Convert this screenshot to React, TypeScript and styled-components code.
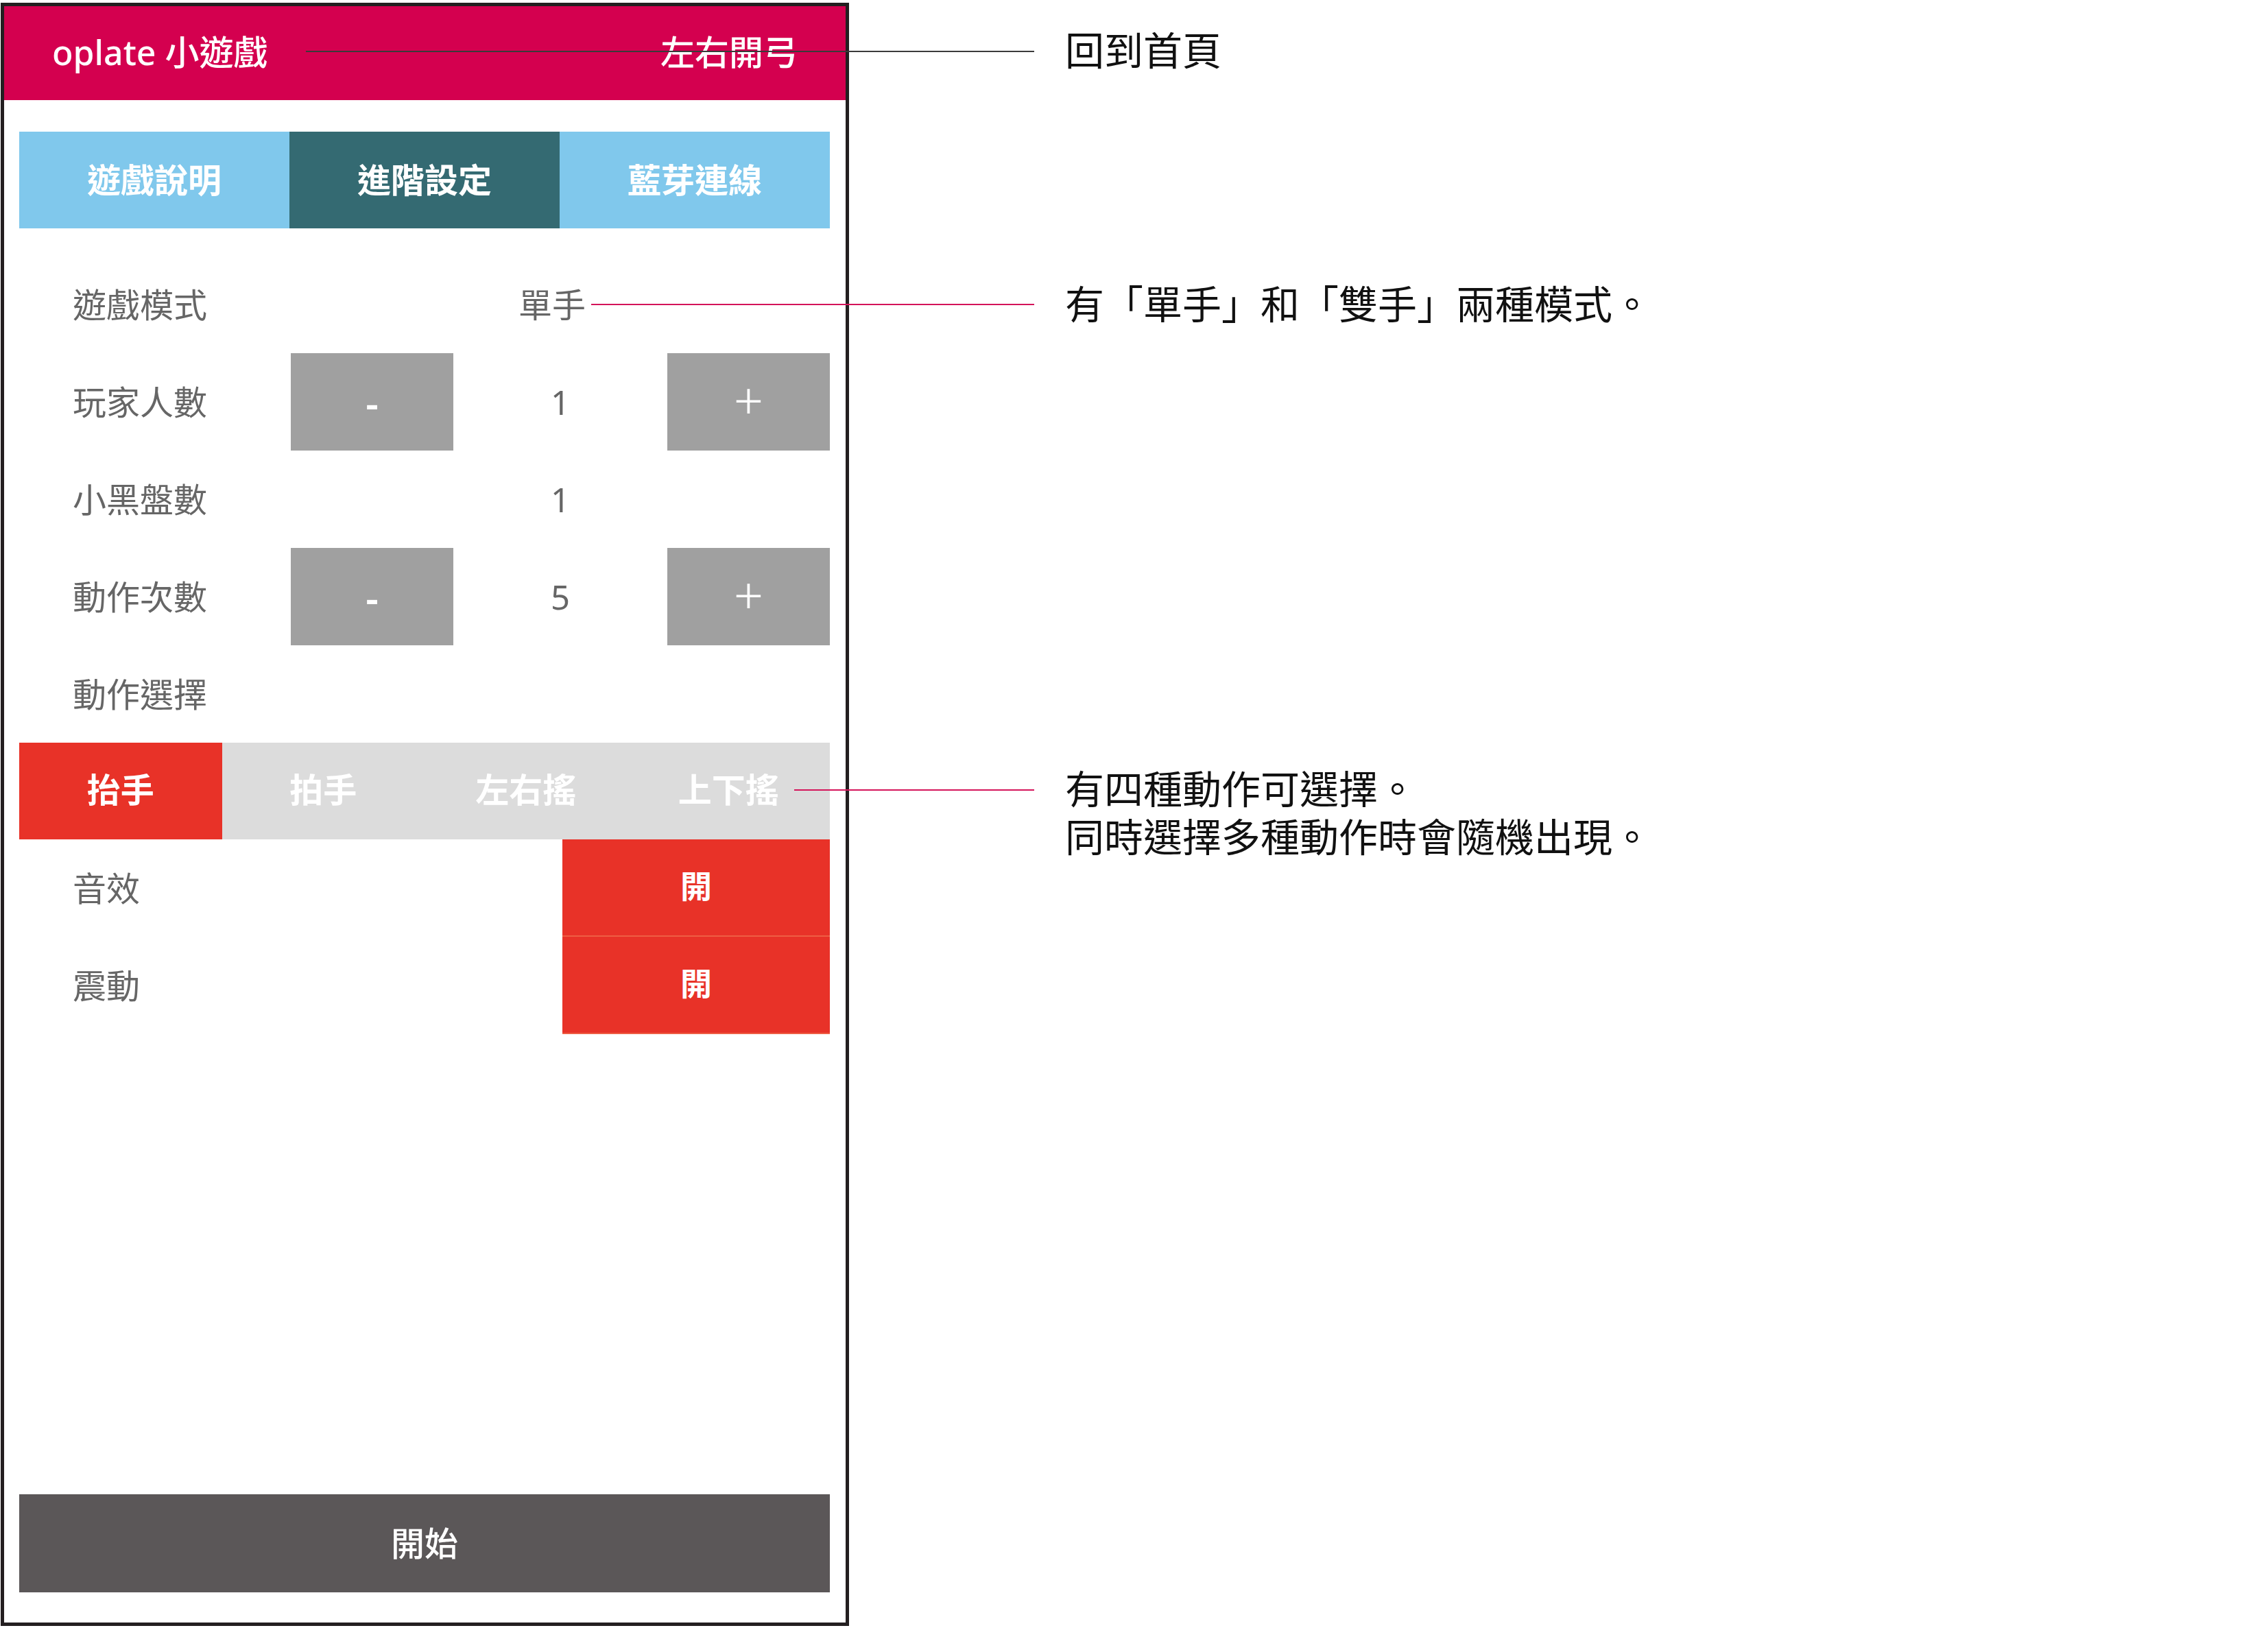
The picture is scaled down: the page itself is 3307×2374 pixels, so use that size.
import { createGlobalStyle, styled } from "styled-components";

const RED = "#e83228";
const LABEL = "#666666";

const GlobalStyle = createGlobalStyle`
  * { box-sizing: border-box; }
  html, body { margin: 0; padding: 0; background: #ffffff; }
  body {
    font-family: "Noto Sans", "Noto Sans CJK TC", sans-serif;
  }
`;

const tabs = ["遊戲說明", "進階設定", "藍芽連線"];
const actions = ["抬手", "拍手", "左右搖", "上下搖"];

function App() {
  return (
    <S.Page>
      <GlobalStyle />
      <S.Phone>
        <S.Header>
          <S.Title>oplate 小遊戲</S.Title>
          <S.Title>左右開弓</S.Title>
        </S.Header>
        <S.Body>
          <S.Tabs>
            {tabs.map((t, i) => (
              <S.Tab key={t} $active={i === 1}>
                {t}
              </S.Tab>
            ))}
          </S.Tabs>

          <S.Settings>
            <S.Row>
              <S.Label>遊戲模式</S.Label>
              <S.Value $shift={24}>單手</S.Value>
            </S.Row>
            <S.Row>
              <S.Label>玩家人數</S.Label>
              <S.StepButton>-</S.StepButton>
              <S.Value>1</S.Value>
              <S.StepButton $plus>+</S.StepButton>
            </S.Row>
            <S.Row>
              <S.Label>小黑盤數</S.Label>
              <S.Value>1</S.Value>
            </S.Row>
            <S.Row>
              <S.Label>動作次數</S.Label>
              <S.StepButton>-</S.StepButton>
              <S.Value>5</S.Value>
              <S.StepButton $plus>+</S.StepButton>
            </S.Row>
            <S.Row>
              <S.Label>動作選擇</S.Label>
            </S.Row>
          </S.Settings>

          <S.Segments>
            {actions.map((a, i) => (
              <S.Segment key={a} $active={i === 0}>
                {a}
              </S.Segment>
            ))}
          </S.Segments>

          <S.ToggleRow>
            <S.Label>音效</S.Label>
            <S.Toggle>開</S.Toggle>
          </S.ToggleRow>
          <S.ToggleRow>
            <S.Label>震動</S.Label>
            <S.Toggle>開</S.Toggle>
          </S.ToggleRow>

          <S.StartButton>開始</S.StartButton>
        </S.Body>
      </S.Phone>

      <S.Notes>
        <S.Note $top={31}>回到首頁</S.Note>
        <S.Note $top={300}>有「單手」和「雙手」兩種模式。</S.Note>
        <S.Note $top={637}>
          <S.NoteLine>有四種動作可選擇。</S.NoteLine>
          <S.NoteLine>同時選擇多種動作時會隨機出現。</S.NoteLine>
        </S.Note>
      </S.Notes>

      <S.Connector $left={446} $top={74} $width={1062} $color="#3a3a3a" />
      <S.Connector $left={862} $top={443} $width={646} $color="#d4145a" />
      <S.Connector $left={1158} $top={1151} $width={350} $color="#d4145a" />
    </S.Page>
  );
}
export default App;

const Page = styled.div`
  position: relative;
  display: flex;
  align-items: flex-start;
  padding: 4px 0 0 1px;
  width: 3307px;
`;

const Phone = styled.div`
  width: 1237px;
  height: 2367px;
  border: 5px solid #231f20;
  display: flex;
  flex-direction: column;
  background: #ffffff;
`;

const Header = styled.div`
  height: 137px;
  background: #d4004f;
  display: flex;
  align-items: center;
  justify-content: space-between;
  padding: 0 70px 4px 70px;
`;

const Title = styled.div`
  color: #ffffff;
  font-size: 50px;
  font-weight: 500;
  line-height: 1;
`;

const Body = styled.div`
  flex: 1;
  display: flex;
  flex-direction: column;
  padding: 46px 23px 44px 22px;
`;

const Tabs = styled.div`
  display: grid;
  grid-template-columns: repeat(3, 1fr);
  height: 141px;
`;

const Tab = styled.div<{ $active?: boolean }>`
  display: flex;
  align-items: center;
  justify-content: center;
  padding-bottom: 6px;
  background: ${({ $active }) => ($active ? "#346a72" : "#80c8ec")};
  color: #ffffff;
  font-size: 49px;
  font-weight: 700;
`;

const Settings = styled.div`
  margin-top: 40px;
  display: flex;
  flex-direction: column;
`;

const Row = styled.div`
  display: grid;
  grid-template-columns: 396px 237px 1fr 237px;
  height: 142px;
  align-items: center;
`;

const Label = styled.div`
  padding-left: 78px;
  color: ${LABEL};
  font-size: 49px;
  line-height: 1;
`;

const Value = styled.div<{ $shift?: number }>`
  grid-column: 3;
  text-align: center;
  padding-right: ${({ $shift }) => $shift ?? 0}px;
  color: ${LABEL};
  font-size: 49px;
  line-height: 1;
`;

const StepButton = styled.div<{ $plus?: boolean }>`
  height: 100%;
  display: flex;
  align-items: center;
  justify-content: center;
  padding-bottom: ${({ $plus }) => ($plus ? 8 : 0)}px;
  background: #a0a0a0;
  color: #ffffff;
  font-size: ${({ $plus }) => ($plus ? 76 : 58)}px;
  font-weight: ${({ $plus }) => ($plus ? 300 : 600)};
`;

const Segments = styled.div`
  display: grid;
  grid-template-columns: repeat(4, 1fr);
  height: 141px;
`;

const Segment = styled.div<{ $active?: boolean }>`
  display: flex;
  align-items: center;
  justify-content: center;
  padding-bottom: 10px;
  background: ${({ $active }) => ($active ? RED : "#dcdcdc")};
  color: #ffffff;
  font-size: 49px;
  font-weight: 700;
`;

const ToggleRow = styled.div`
  display: grid;
  grid-template-columns: 1fr 390px;
  height: 142px;
  align-items: center;
`;

const Toggle = styled.div`
  height: 100%;
  display: flex;
  align-items: center;
  justify-content: center;
  padding-bottom: 10px;
  background: ${RED};
  border-bottom: 2px solid #ee5e44;
  color: #ffffff;
  font-size: 46px;
  font-weight: 700;
`;

const StartButton = styled.div`
  margin-top: auto;
  height: 143px;
  display: flex;
  align-items: center;
  justify-content: center;
  padding-bottom: 6px;
  background: #5b5758;
  color: #ffffff;
  font-size: 49px;
  font-weight: 500;
`;

const Notes = styled.div`
  display: flex;
  flex-direction: column;
  padding-left: 315px;
`;

const Note = styled.div<{ $top: number }>`
  display: flex;
  flex-direction: column;
  margin-top: ${({ $top }) => $top}px;
  color: #111111;
  font-family: "Noto Sans CJK TC", sans-serif;
  font-size: 57px;
  line-height: 70px;
`;

const NoteLine = styled.span`
  display: block;
`;

const Connector = styled.div<{
  $left: number;
  $top: number;
  $width: number;
  $color: string;
}>`
  position: absolute;
  left: ${({ $left }) => $left}px;
  top: ${({ $top }) => $top}px;
  width: ${({ $width }) => $width}px;
  height: 2px;
  background: ${({ $color }) => $color};
`;

const S = {
  Page,
  Phone,
  Header,
  Title,
  Body,
  Tabs,
  Tab,
  Settings,
  Row,
  Label,
  Value,
  StepButton,
  Segments,
  Segment,
  ToggleRow,
  Toggle,
  StartButton,
  Notes,
  Note,
  NoteLine,
  Connector,
};
